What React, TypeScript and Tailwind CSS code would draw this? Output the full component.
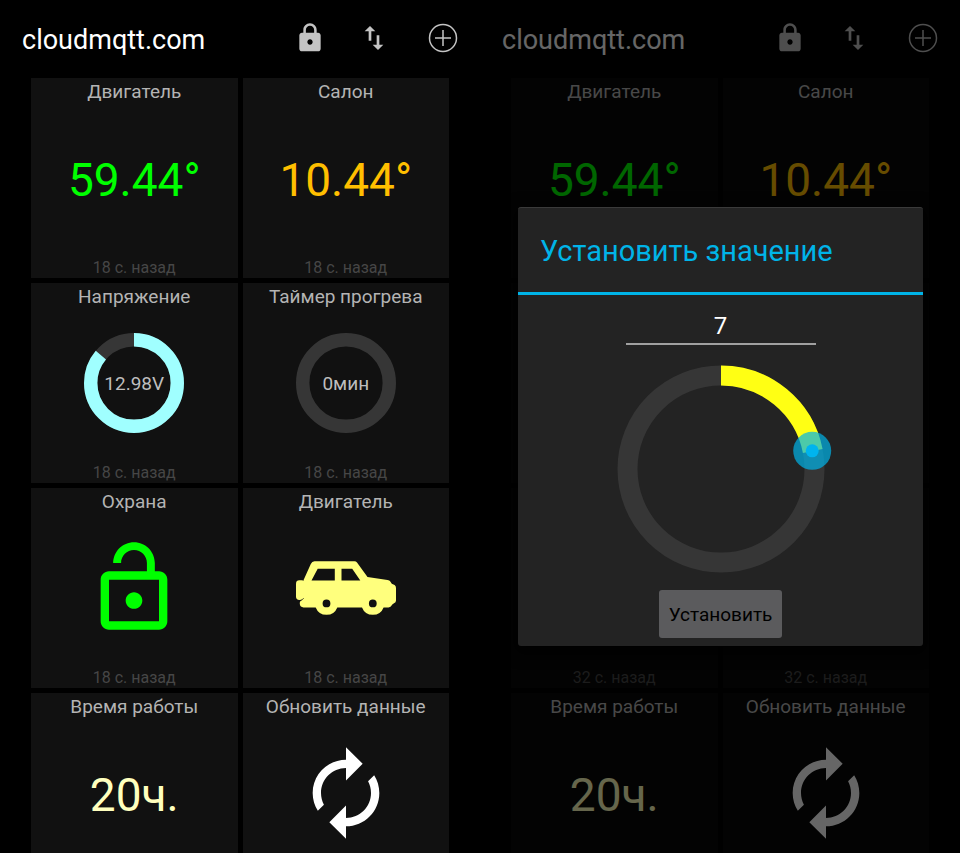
import { useState } from "react";
import type { ReactNode } from "react";

const LOCK =
  "M18 8h-1V6c0-2.76-2.24-5-5-5S7 3.24 7 6v2H6c-1.1 0-2 .9-2 2v10c0 1.1.9 2 2 2h12c1.1 0 2-.9 2-2V10c0-1.1-.9-2-2-2zm-6 9c-1.1 0-2-.9-2-2s.9-2 2-2 2 .9 2 2-.9 2-2 2zm3.1-9H8.9V6c0-1.71 1.39-3.1 3.1-3.1 1.71 0 3.1 1.39 3.1 3.1v2z";
const LOCK_OPEN =
  "M12 17c1.1 0 2-.9 2-2s-.9-2-2-2-2 .9-2 2 .9 2 2 2zm6-9h-1V6c0-2.76-2.24-5-5-5S7 3.24 7 6h1.9c0-1.71 1.39-3.1 3.1-3.1 1.71 0 3.1 1.39 3.1 3.1v2H6c-1.1 0-2 .9-2 2v10c0 1.1.9 2 2 2h12c1.1 0 2-.9 2-2V10c0-1.1-.9-2-2-2zm0 12H6V10h12v10z";
const SWAP =
  "M16 17.01V10h-2v7.01h-3L15 21l4-3.99h-3zM9 3L5 6.99h3V14h2V6.99h3L9 3z";
const RENEW =
  "M12 6v3l4-4-4-4v3c-4.42 0-8 3.58-8 8 0 1.57.46 3.03 1.24 4.26L6.7 14.8c-.45-.83-.7-1.79-.7-2.8 0-3.31 2.69-6 6-6zm6.76 1.74L17.3 9.2c.44.84.7 1.79.7 2.8 0 3.31-2.69 6-6 6v-3l-4 4 4 4v-3c4.42 0 8-3.58 8-8 0-1.57-.46-3.03-1.24-4.26z";

function Glyph({ d, className }: { d: string; className: string }) {
  return (
    <svg viewBox="0 0 24 24" fill="currentColor" className={className} aria-hidden="true">
      <path d={d} />
    </svg>
  );
}

function CarIcon() {
  return (
    <svg viewBox="0 0 100 100" className="size-[100px] text-[#ffff7d]" fill="currentColor" aria-hidden="true">
      <rect x="0" y="42.3" width="9" height="19.6" rx="3.4" />
      <path
        fillRule="evenodd"
        d="M18.5 23.3H58.5Q60 23.3 61 24.6L71.5 39L91.5 41.9Q93.6 42.3 94.3 43.6L95.8 45.8L98.6 47Q100 48 100 50V62.5Q100 64.5 98 65.3L96.3 66.5L94.8 68.6Q94 69.4 92.5 69.4H87.6A11.6 11.6 0 0 1 66 69.4H41.3A11.6 11.6 0 0 1 19.7 69.4H7.5Q4.2 69.2 3.8 66V64.5Q4 62.4 6 61.9L7.6 60V42L14.8 26Q16 23.3 18.5 23.3ZM21.7 30.7L15.5 42.4H38.8V30.7ZM45.5 30.7V42.4H64.3L56.2 30.7ZM76.8 61.5A3.9 3.9 0 1 0 76.8 69.3A3.9 3.9 0 1 0 76.8 61.5ZM30.5 61.5A3.9 3.9 0 1 0 30.5 69.3A3.9 3.9 0 1 0 30.5 61.5Z"
      />
      <path d="M4.2 62.4Q6.8 61.9 7.6 60.2" fill="none" stroke="#111111" strokeWidth="0.8" />
    </svg>
  );
}

function Gauge({ fraction, label }: { fraction: number; label: string }) {
  const length = 2 * Math.PI * 43.3;
  return (
    <div className="grid place-items-center">
      <svg viewBox="0 0 100 100" className="col-start-1 row-start-1 size-[100px]" fill="none" strokeWidth="13.4" aria-hidden="true">
        <circle cx="50" cy="50" r="43.3" stroke="#363636" />
        {fraction > 0 && (
          <circle
            cx="50"
            cy="50"
            r="43.3"
            stroke="#a0ffff"
            strokeDasharray={`${length * fraction} ${length}`}
            transform="rotate(-90 50 50)"
          />
        )}
      </svg>
      <span className="col-start-1 row-start-1 pt-0.5 text-[19px] leading-6 text-[#bebebe]">{label}</span>
    </div>
  );
}

function Reading({ className, children }: { className: string; children: ReactNode }) {
  return <span className={`pt-1 text-[46px] leading-[56px] ${className}`}>{children}</span>;
}

function Tile({ title, age, children }: { title: string; age: string; children: ReactNode }) {
  return (
    <article className="grid h-[200px] grid-rows-[28px_1fr_28px] justify-items-center bg-[#111111] in-[[inert]]:bg-[#080808]">
      <h2 className="text-[19px] leading-7 text-[#b4b4b4]">{title}</h2>
      <div className="flex items-center justify-center">{children}</div>
      <p className="self-end text-[16px] leading-5 text-[#464646]">{age}</p>
    </article>
  );
}

function Dashboard({ age }: { age: string }) {
  return (
    <>
      <header className="mb-0.5 flex h-19 items-center pl-[22px] text-[#c3c3c3]">
        <h1 className="flex-1 pt-1 text-[27px] leading-8 text-white">cloudmqtt.com</h1>
        <button type="button" aria-label="Блокировка" className="flex h-12 w-16 items-center justify-center">
          <Glyph d={LOCK} className="size-8" />
        </button>
        <button type="button" aria-label="Порядок" className="flex h-12 w-16 items-center justify-center">
          <Glyph d={SWAP} className="size-8" />
        </button>
        <button type="button" aria-label="Добавить" className="flex h-12 w-[74px] items-center justify-center">
          <svg viewBox="0 0 30 30" className="size-[30px]" fill="none" stroke="currentColor" strokeWidth="1.5" aria-hidden="true">
            <circle cx="15" cy="15" r="13.5" />
            <path d="M15 7v16M7 15h16" />
          </svg>
        </button>
      </header>
      <main className="grid grid-cols-2 gap-[5px] px-[31px]">
        <Tile title="Двигатель" age={age}>
          <Reading className="text-[#00ff00]">59.44°</Reading>
        </Tile>
        <Tile title="Салон" age={age}>
          <Reading className="text-[#ffbf00]">10.44°</Reading>
        </Tile>
        <Tile title="Напряжение" age={age}>
          <Gauge fraction={0.86} label="12.98V" />
        </Tile>
        <Tile title="Таймер прогрева" age={age}>
          <Gauge fraction={0} label="0мин" />
        </Tile>
        <Tile title="Охрана" age={age}>
          <Glyph d={LOCK_OPEN} className="size-[100px] text-[#00ff00]" />
        </Tile>
        <Tile title="Двигатель" age={age}>
          <CarIcon />
        </Tile>
        <Tile title="Время работы" age={age}>
          <Reading className="text-[#ffffbe]">20ч.</Reading>
        </Tile>
        <Tile title="Обновить данные" age={age}>
          <button type="button" aria-label="Обновить данные">
            <Glyph d={RENEW} className="size-[100px] text-white" />
          </button>
        </Tile>
      </main>
    </>
  );
}

const MAX = 32;

function ValueDialog() {
  const [value, setValue] = useState(7);
  const length = 2 * Math.PI * 93.5;
  const angle = (value / MAX) * 2 * Math.PI;
  const thumbX = 104 + 93 * Math.sin(angle);
  const thumbY = 104 - 93 * Math.cos(angle);
  return (
    <div
      role="dialog"
      aria-labelledby="dialog-title"
      className="mr-[37px] ml-[38px] flex-1 rounded-[3px] border-t border-[#3a3a3a] bg-[#232323] shadow-[0_4px_14px_4px_rgba(0,0,0,0.8)]"
    >
      <h2 id="dialog-title" className="border-b-[3px] border-[#00b4e8] px-[22px] pt-[23px] pb-[21px] text-[29px] leading-10 text-[#00b4e8]">
        Установить значение
      </h2>
      <form className="flex flex-col items-center pt-3 pb-2" onSubmit={(e) => e.preventDefault()}>
        <input
          aria-label="Значение"
          inputMode="numeric"
          value={value}
          onChange={(e) => setValue(Math.min(MAX, Number(e.target.value) || 0))}
          className="h-[38px] w-[190px] border-b-2 border-[#a0a0a0] bg-transparent pt-0.5 text-center text-[24px] leading-8 text-white outline-none"
        />
        <div className="relative mt-5 size-[208px]">
          <svg viewBox="0 0 208 208" className="size-full overflow-visible" fill="none" strokeWidth="20" aria-hidden="true">
            <circle cx="104" cy="104" r="93.5" stroke="#363636" />
            <circle
              cx="104"
              cy="104"
              r="93.5"
              stroke="#ffff14"
              strokeDasharray={`${(length * value) / MAX} ${length}`}
              transform="rotate(-90 104 104)"
            />
            <circle cx={thumbX} cy={thumbY} r="19" fill="#00b4e8" fillOpacity="0.7" stroke="none" />
            <circle cx={thumbX} cy={thumbY} r="6.5" fill="#00b4ee" stroke="none" />
          </svg>
          <input
            type="range"
            aria-label="Установить значение"
            min={0}
            max={MAX}
            value={value}
            onChange={(e) => setValue(Number(e.target.value))}
            className="absolute inset-0 size-full cursor-pointer opacity-0"
          />
        </div>
        <button type="submit" className="mt-[17px] h-12 rounded-[3px] bg-[#5b5b5d] px-2.5 pt-0.5 text-[19px] leading-6 text-black">
          Установить
        </button>
      </form>
    </div>
  );
}

export default function App() {
  return (
    <div className="grid h-screen grid-cols-2 overflow-hidden bg-black font-[Roboto,'Noto_Sans',sans-serif]">
      <section className="overflow-hidden">
        <Dashboard age="18 с. назад" />
      </section>
      <section className="relative overflow-hidden">
        <div inert>
          <Dashboard age="32 с. назад" />
        </div>
        <div className="absolute inset-0 flex items-center bg-black/60">
          <ValueDialog />
        </div>
      </section>
    </div>
  );
}
